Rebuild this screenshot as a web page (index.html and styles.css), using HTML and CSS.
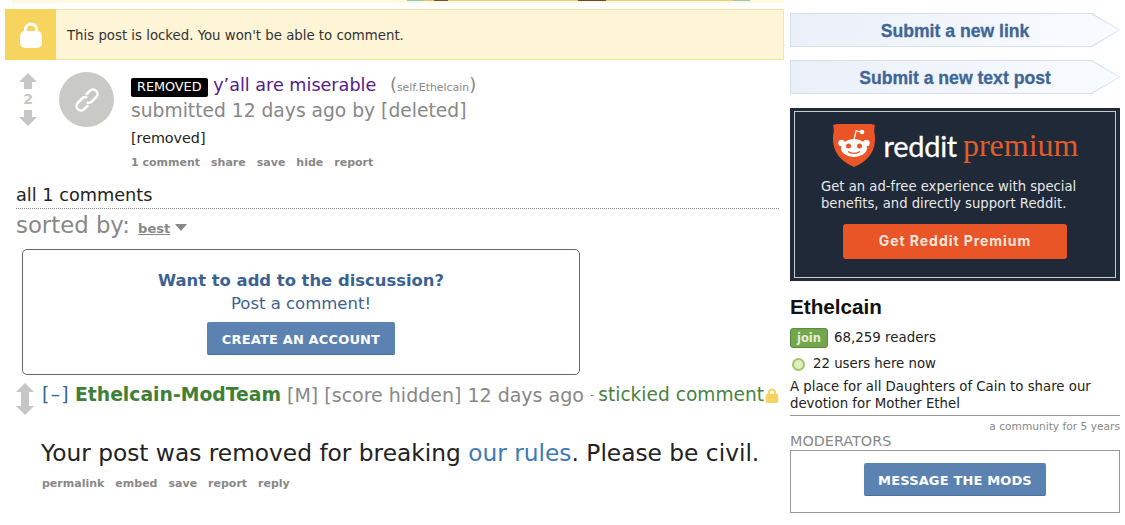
FILE: index.html
```html
<!DOCTYPE html>
<html lang="en">
<head>
<meta charset="utf-8">
<title>y'all are miserable : Ethelcain</title>
<link rel="stylesheet" href="styles.css">
</head>
<body>
<div class="page">
  <main class="content">
    <div class="top-strip"><div class="top-picture"></div></div>
    <div class="locked">
      <div class="locked-icon">
        <svg width="24" height="27" viewBox="0 0 24 27"><path d="M6.5 13V8.5a5.5 5.5 0 0 1 11 0V13" fill="none" stroke="#fff" stroke-width="3"/><rect x="1" y="10" width="22" height="17" rx="5" fill="#fff"/></svg>
      </div>
      <p class="locked-text">This post is locked. You won't be able to comment.</p>
    </div>
    <article class="post">
      <div class="votes">
        <svg class="arrow" width="18" height="16" viewBox="0 0 18 16"><path d="M9 0 18 9H13V16H5V9H0Z"/></svg>
        <span class="score">2</span>
        <svg class="arrow" width="18" height="16" viewBox="0 0 18 16"><path d="M5 0H13V7H18L9 16 0 7H5Z"/></svg>
      </div>
      <div class="thumb">
        <svg width="30" height="30" viewBox="0 0 30 30"><g fill="none" stroke="#fff" stroke-width="2.6" stroke-linecap="round" transform="rotate(-45 15 15)"><path d="M11 19.5H6.5a4.5 4.5 0 0 1 0-9H13a4.500 4.500 0 0 1 3.500 2"/><path d="M19 10.500H23.500a4.500 4.500 0 0 1 0 9H17a4.500 4.500 0 0 1-3.500-2"/></g></svg>
      </div>
      <div class="post-body">
        <div class="title-line"><span class="removed">REMOVED</span> <a class="title">y’all are miserable</a> <span class="domain">(<small>self.Ethelcain</small>)</span></div>
        <div class="tagline">submitted 12 days ago by [deleted]</div>
        <div class="selftext">[removed]</div>
        <ul class="actions"><li>1 comment</li><li>share</li><li>save</li><li>hide</li><li>report</li></ul>
      </div>
    </article>
    <div class="comment-head">all 1 comments</div>
    <div class="sort">sorted by: <b class="sort-choice">best</b><i class="caret"></i></div>
    <section class="cta">
      <strong class="cta-title">Want to add to the discussion?</strong>
      <span class="cta-sub">Post a comment!</span>
      <a class="btn">CREATE AN ACCOUNT</a>
    </section>
    <article class="comment">
      <div class="comment-votes">
        <svg class="arrow" width="18" height="16" viewBox="0 0 18 16"><path d="M9 0 18 9H13V16H5V9H0Z"/></svg>
        <svg class="arrow" width="18" height="16" viewBox="0 0 18 16"><path d="M5 0H13V7H18L9 16 0 7H5Z"/></svg>
      </div>
      <div class="comment-main">
        <div class="comment-tagline"><span class="toggle">[–]</span> <b class="author">Ethelcain-ModTeam</b> <span class="grey">[M] [score hidden] 12 days ago</span> <small class="grey dash">-</small><span class="stickied">stickied comment</span><svg class="mini-lock" width="14" height="15" viewBox="0 0 24 26"><path d="M6.500 12V8a5.500 5.500 0 0 1 11 0v4" fill="none" stroke="#f5d25f" stroke-width="3.500"/><rect x="1" y="10" width="22" height="16" rx="4" fill="#f5d25f"/></svg></div>
        <p class="comment-text">Your post was removed for breaking <a class="link">our rules</a>. Please be civil.</p>
        <ul class="actions comment-actions"><li>permalink</li><li>embed</li><li>save</li><li>report</li><li>reply</li></ul>
      </div>
    </article>
  </main>
  <aside class="side">
    <a class="submit"><span class="submit-label">Submit a new link</span></a>
    <a class="submit"><span class="submit-label">Submit a new text post</span></a>
    <div class="premium">
      <div class="premium-inner">
        <div class="premium-logo">
          <svg width="44" height="44" viewBox="0 0 44 44"><path d="M5 1H39L43 2C42 6 42 9 43 13 44 27 37 38 22 44 7 38 0 27 1 13 2 9 2 6 1 2Z" fill="#e95526"/><g fill="#fff"><ellipse cx="22" cy="25" rx="13" ry="9"/><circle cx="9.500" cy="20" r="3.200"/><circle cx="34.500" cy="20" r="3.200"/><circle cx="30" cy="9" r="2.300"/></g><path d="M22 17 24 8 30 9" fill="none" stroke="#fff" stroke-width="1.200"/><circle cx="16.500" cy="23" r="2.500" fill="#e95526"/><circle cx="27.500" cy="23" r="2.500" fill="#e95526"/><path d="M16 28.500c3 2.500 9 2.500 12 0" fill="none" stroke="#e95526" stroke-width="1.400"/></svg>
          <span class="logo-reddit">reddit</span><span class="logo-premium">premium</span>
        </div>
        <p class="premium-text">Get an ad-free experience with special benefits, and directly support Reddit.</p>
        <a class="premium-btn">Get Reddit Premium</a>
      </div>
    </div>
    <h1 class="sub-name">Ethelcain</h1>
    <div class="readers"><span class="join">join</span> 68,259 readers</div>
    <div class="online"><i class="dot"></i>22 users here now</div>
    <p class="desc">A place for all Daughters of Cain to share our devotion for Mother Ethel</p>
    <div class="age">a community for 5 years</div>
    <h2 class="mods-head">MODERATORS</h2>
    <div class="mods"><a class="btn">MESSAGE THE MODS</a></div>
  </aside>
</div>
</body>
</html>
```

FILE: styles.css
```css
* { box-sizing: border-box; }
html, body { margin: 0; height: 525px; overflow: hidden; background: #fff; }
body { font-family: "DejaVu Sans", Verdana, sans-serif; color: #222; }
p, h1, h2, ul { margin: 0; padding: 0; }
small { font-size: inherit; }

.page { display: grid; grid-template-columns: 784px 330px; column-gap: 6px; align-items: start; }

.top-strip { height: 3px; margin: 0 0 6px 12px; background: #fdf8e0; padding-left: 395px; }
.top-picture { width: 343px; height: 1px; background: linear-gradient(90deg, #8cc9ae 0 5%, #e2c46c 5% 8%, #7a4f2a 8% 12%, #e9cf75 12% 50%, #6e4a2c 50% 58%, #e9cf75 58% 95%, #8cc9ae 95%); }
.locked { display: flex; align-items: center; height: 51px; margin-left: 5px; border: 1px solid #f5e5a3; background: #fdf5d6; }
.locked-icon { display: flex; align-items: center; justify-content: center; width: 51px; height: 51px; margin: -1px 11px -1px -1px; background: #f6d45d; }
.locked-text { font-size: 13.3px; color: #333; padding-top: 1px; }

.post { display: flex; margin: 13px 0 0 19px; }
.votes { display: flex; flex-direction: column; align-items: center; width: 18px; }
.arrow { display: block; fill: #c6c6c6; }
.score { font-size: 14px; font-weight: 700; color: #c6c6c6; line-height: 21px; height: 21px; }
.thumb { display: flex; align-items: center; justify-content: center; width: 55px; height: 55px; margin: -1px 17px 0 22px; border-radius: 50%; background: #c9c9c5; }
.post-body { display: flex; flex-direction: column; }
.title-line { font-size: 17.6px; line-height: 24px; white-space: nowrap; }
.removed { display: inline-block; font-size: 12.8px; line-height: 18px; height: 19px; padding: 0 6px; background: #000; color: #fff; border-radius: 2px; }
.title { color: #551a8b; }
.domain { color: #888; font-size: 18px; margin-left: 8px; }
.domain small { font-size: 10.9px; }
.tagline { font-size: 18.7px; line-height: 22px; color: #888; white-space: nowrap; }
.selftext { font-size: 14.3px; margin-top: 8px; line-height: 17px; }
.actions { display: flex; gap: 11px; list-style: none; font-size: 11px; font-weight: 700; color: #888; margin-top: 9px; line-height: 14px; }

.comment-head { font-size: 17.7px; line-height: 22px; margin: 14px 5px 0 16px; padding-bottom: 2px; border-bottom: 1px dotted #888; color: #222; }
.sort { font-size: 22.8px; line-height: 28px; margin: 2px 0 0 16px; color: #888; }
.sort-choice { font-size: 13px; text-decoration: underline; margin-left: 1px; }
.caret { display: inline-block; margin-left: 5px; border: 6px solid transparent; border-top: 7px solid #888; border-bottom: 0; vertical-align: 2px; }

.cta { display: flex; flex-direction: column; align-items: center; width: 558px; height: 126px; margin: 6px 0 0 22px; padding-top: 21px; border: 1px solid #666; border-radius: 5px; color: #369; }
.cta-title { font-size: 16.4px; line-height: 20px; color: #3b6292; }
.cta-sub { font-size: 16.5px; line-height: 26px; color: #3b6292; }
.btn { display: inline-block; font-size: 13px; font-weight: 700; color: #fff; letter-spacing: .15px; background: #5b82b0; border-radius: 2px; border-bottom: 1px solid #4a6f9c; height: 33px; line-height: 35px; padding: 0 14.5px; margin-top: 5px; }

.comment { display: flex; margin: 8px 0 0 16px; }
.comment-votes { width: 18px; margin-right: 8px; }
.comment-main { flex: 1; }
.comment-tagline { font-size: 18.8px; line-height: 24px; white-space: nowrap; display: flex; align-items: center; }
.comment-tagline > * { white-space: pre; }
.toggle { color: #369; margin-right: 5px; letter-spacing: 1.3px; }
.author { color: #3f8037; margin-right: 6px; }
.grey { color: #888; font-size: 19px; }
.dash { font-size: 12px; margin: 0 4px 0 6px; }
.stickied { color: #4a8240; font-size: 18.6px; }
.mini-lock { margin-left: 1px; }
.comment-text { font-size: 23.3px; line-height: 30px; margin: 31px 0 0 -1px; white-space: nowrap; }
.link { color: #3d7ab8; }
.comment-actions { margin-top: 9px; }

.side { padding-top: 13px; }
.submit { position: relative; display: block; height: 34px; margin-bottom: 13px; line-height: 36px; text-align: center; font-family: "Liberation Sans", Arial, sans-serif; font-size: 17.6px; font-weight: 700; color: #3f6696; -webkit-text-stroke: .3px #3f6696; background: #d5dfec; clip-path: polygon(0 0, 91.5% 0, 100% 50%, 91.5% 100%, 0 100%); }
.submit::before { content: ""; position: absolute; inset: 1px; background: linear-gradient(100deg, #eaf0f9, #f9fbfe); clip-path: polygon(0 0, 91.5% 0, 100% 50%, 91.5% 100%, 0 100%); }
.submit-label { position: relative; }
.premium { height: 173px; padding: 3px 4px; background: #1f2937; margin-top: 14px; }
.premium-inner { display: flex; flex-direction: column; align-items: center; height: 100%; border: 1px solid #c7ccd1; }
.premium-logo { display: flex; align-items: center; gap: 6px; margin-top: 11px; height: 44px; color: #fff; }
.logo-reddit { font-family: Lato, sans-serif; font-size: 29px; letter-spacing: -.3px; margin-left: 2px; -webkit-text-stroke: .3px #fff; }
.logo-premium { font-family: "Liberation Serif", serif; font-size: 32px; color: #e05d2c; }
.premium-text { font-size: 13.2px; line-height: 17px; color: #e8e8e8; width: 268px; margin-top: 11px; }
.premium-btn { width: 224px; height: 35px; line-height: 34px; margin-top: 12px; text-align: center; font-family: Inter, sans-serif; font-size: 14px; font-weight: 700; letter-spacing: .95px; color: #f6e6df; background: #e95526; border-radius: 3px; }

.sub-name { font-family: "Liberation Sans", Arial, sans-serif; font-size: 20.7px; line-height: 24px; margin-top: 14px; color: #111; }
.readers { display: flex; align-items: center; gap: 6px; font-size: 13.4px; margin-top: 9px; line-height: 20px; }
.join { display: inline-block; font-size: 11.5px; font-weight: 700; color: #e6f0d8; background: #73a64d; border: 1px solid #5a8a3a; border-radius: 3px; padding: 0 6px; line-height: 18px; }
.online { display: flex; align-items: center; font-size: 13.3px; line-height: 20px; margin-top: 6px; }
.dot { width: 13px; height: 13px; margin: 0 8px 0 2px; border-radius: 50%; background: #dff0c0; border: 2px solid #a4c36c; }
.desc { font-size: 13.3px; line-height: 17px; margin-top: 4px; padding-bottom: 3px; border-bottom: 1px solid #999; }
.age { font-size: 10.65px; color: #888; text-align: right; line-height: 14px; margin-top: 4px; }
.mods-head { font-size: 14.4px; font-weight: 400; color: #888; line-height: 16px; margin: -1px 0 1px; }
.mods { display: flex; justify-content: center; height: 63px; padding-top: 7px; border: 1px solid #999; }
.mods .btn { margin: 5px 0 0; }
```
